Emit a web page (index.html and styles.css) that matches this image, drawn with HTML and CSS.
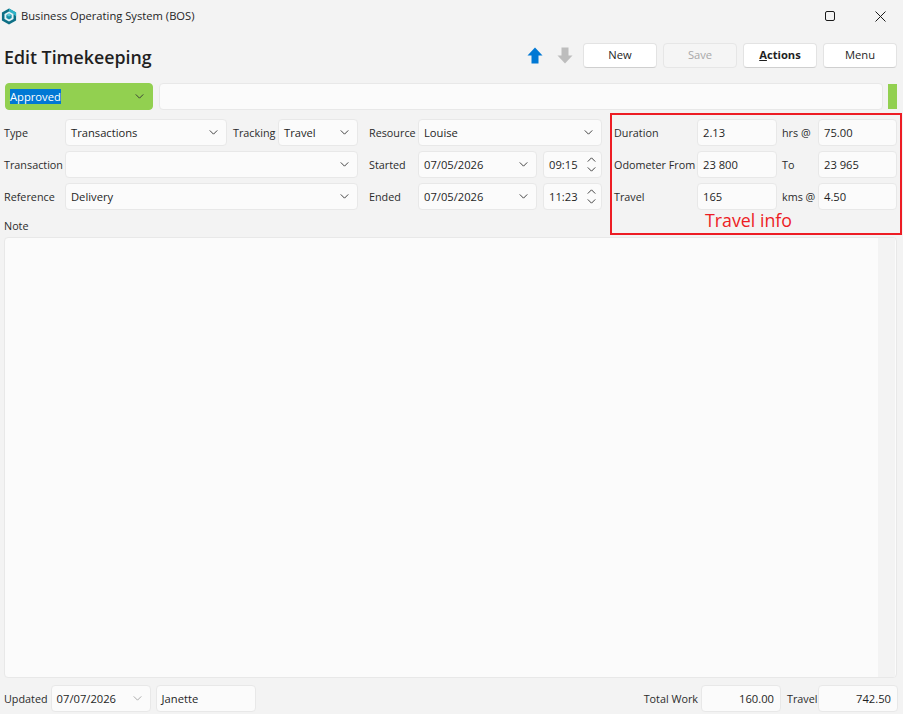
FILE: index.html
```html
<!DOCTYPE html>
<html lang="en">
<head>
    <meta charset="UTF-8">
    <meta name="viewport" content="width=device-width, initial-scale=1.0">
    <title>Business Operating System (BOS)</title>
    <link rel="stylesheet" href="styles.css">
</head>
<body>
    <svg class="defs" width="0" height="0">
        <symbol id="chev-down" viewBox="0 0 10 6"><path d="M0.5 0.5 L5 5 L9.5 0.5" fill="none" stroke="currentColor" stroke-width="1.1"/></symbol>
        <symbol id="chev-up" viewBox="0 0 10 6"><path d="M0.5 5.5 L5 1 L9.5 5.5" fill="none" stroke="currentColor" stroke-width="1.1"/></symbol>
    </svg>

    <div class="title-bar">
        <svg class="logo" width="16" height="17" viewBox="0 0 16 18">
            <path d="M8 0.5 L15.5 4.8 V13.2 L8 17.5 L0.5 13.2 V4.8 Z" fill="#0d6f85"/>
            <path d="M8 0.5 L15.5 4.8 V9 L12.8 6.6 L8 3.6 Z" fill="#2fb4c8"/>
            <path d="M8 3.6 L12.8 6.4 V11.6 L8 14.4 L3.2 11.6 V6.4 Z" fill="#e4f4f7"/>
            <path d="M8 5.8 L10.8 7.4 V10.6 L8 12.2 L5.2 10.6 V7.4 Z" fill="#1591a8"/>
            <path d="M8 5.8 L10.8 7.4 L8 9 L5.2 7.4 Z" fill="#5cc8d8"/>
        </svg>
        <span class="app-name">Business Operating System (BOS)</span>
        <div class="window-buttons">
            <svg width="10" height="10" viewBox="0 0 10 10"><rect x="0.5" y="0.5" width="9" height="9" rx="1.5" fill="none" stroke="#1a1a1a"/></svg>
            <svg width="11" height="11" viewBox="0 0 11 11"><path d="M0.5 0.5 L10.5 10.5 M10.5 0.5 L0.5 10.5" stroke="#1a1a1a"/></svg>
        </div>
    </div>

    <div class="toolbar">
        <h1>Edit Timekeeping</h1>
        <div class="toolbar-actions">
            <svg class="arrow" width="16" height="17" viewBox="0 0 16 17"><path d="M8 0.5 L15.5 8.5 H11.5 V16.5 H4.5 V8.5 H0.5 Z" fill="#0078d4"/></svg>
            <svg class="arrow" width="16" height="17" viewBox="0 0 16 17"><path d="M8 16.5 L15.5 8.5 H11.5 V0.5 H4.5 V8.5 H0.5 Z" fill="#bdbdbd"/></svg>
            <button class="btn">New</button>
            <button class="btn btn-disabled">Save</button>
            <button class="btn btn-bold"><u>A</u>ctions</button>
            <button class="btn">Menu</button>
        </div>
    </div>

    <div class="status-row">
        <div class="field status-select">
            <span class="selected">Approved</span>
            <svg class="chev"><use href="#chev-down"/></svg>
        </div>
        <div class="field status-text"></div>
        <div class="status-flag"></div>
    </div>

    <div class="form">
        <div class="group group-left">
            <label>Type</label>
            <div class="field"><span>Transactions</span><svg class="chev"><use href="#chev-down"/></svg></div>
            <label class="label-inner">Tracking</label>
            <div class="field"><span>Travel</span><svg class="chev"><use href="#chev-down"/></svg></div>
            <label>Transaction</label>
            <div class="field span-3"><span></span><svg class="chev"><use href="#chev-down"/></svg></div>
            <label>Reference</label>
            <div class="field span-3"><span>Delivery</span><svg class="chev"><use href="#chev-down"/></svg></div>
        </div>

        <div class="group group-middle">
            <label>Resource</label>
            <div class="field span-2"><span>Louise</span><svg class="chev"><use href="#chev-down"/></svg></div>
            <label>Started</label>
            <div class="field"><span>07/05/2026</span><svg class="chev"><use href="#chev-down"/></svg></div>
            <div class="field time-field">
                <span>09:15</span>
                <div class="spinner"><svg class="chev"><use href="#chev-up"/></svg><svg class="chev"><use href="#chev-down"/></svg></div>
            </div>
            <label>Ended</label>
            <div class="field"><span>07/05/2026</span><svg class="chev"><use href="#chev-down"/></svg></div>
            <div class="field time-field">
                <span>11:23</span>
                <div class="spinner"><svg class="chev"><use href="#chev-up"/></svg><svg class="chev"><use href="#chev-down"/></svg></div>
            </div>
        </div>

        <div class="group group-right">
            <label>Duration</label>
            <div class="field"><span>2.13</span></div>
            <label class="label-inner">hrs @</label>
            <div class="field"><span>75.00</span></div>
            <label>Odometer From</label>
            <div class="field"><span>23 800</span></div>
            <label class="label-inner">To</label>
            <div class="field"><span>23 965</span></div>
            <label>Travel</label>
            <div class="field"><span>165</span></div>
            <label class="label-inner">kms @</label>
            <div class="field"><span>4.50</span></div>
        </div>
    </div>

    <!-- annotation drawn over the screenshot -->
    <div class="callout"><span>Travel info</span></div>

    <label class="note-label">Note</label>
    <div class="note">
        <div class="note-scroll"></div>
    </div>

    <div class="footer">
        <label>Updated</label>
        <div class="field footer-date"><span>07/07/2026</span><svg class="chev chev-muted"><use href="#chev-down"/></svg></div>
        <div class="field footer-name"><span>Janette</span></div>
        <label class="total-label">Total Work</label>
        <div class="field footer-total"><span>160.00</span></div>
        <label class="travel-label">Travel</label>
        <div class="field footer-total"><span>742.50</span></div>
    </div>
</body>
</html>
```

FILE: styles.css
```css
* {
    margin: 0;
    padding: 0;
    box-sizing: border-box;
}

body {
    position: relative;
    width: 903px;
    height: 714px;
    overflow: hidden;
    background-color: #f3f3f3;
    color: #1f1f1f;
    font-family: "Open Sans", "Noto Sans", sans-serif;
    font-size: 11.2px;
}

.defs {
    position: absolute;
}

label {
    white-space: nowrap;
    font-size: 10.8px;
    color: #2b2b2b;
}

.title-bar {
    height: 32px;
    display: flex;
    align-items: center;
    padding-left: 1px;
}

.logo {
    margin-top: 1px;
}

.app-name {
    margin-left: 4px;
    margin-top: -2px;
}

.window-buttons {
    margin-left: auto;
    display: flex;
    align-items: center;
    gap: 40px;
    padding-right: 17px;
}

.toolbar {
    height: 51px;
    padding: 11px 6px 0 4px;
    display: flex;
    align-items: flex-start;
}

h1 {
    font-size: 17.8px;
    font-weight: 600;
    line-height: 28px;
}

.toolbar-actions {
    margin-left: auto;
    display: flex;
    align-items: center;
    gap: 6px;
}

.arrow {
    margin-right: 8px;
}

.arrow + .btn {
    margin-left: -4px;
}

.btn {
    width: 74px;
    height: 25px;
    padding-bottom: 2px;
    background-color: #fff;
    border: 1px solid #e3e3e3;
    border-bottom-color: #cfcfcf;
    border-radius: 4px;
    font-family: inherit;
    font-size: 11.2px;
    color: #1f1f1f;
}

.btn-disabled {
    background-color: #f5f5f5;
    border-color: #e6e6e6;
    color: #a8a8a8;
}

.btn-bold {
    font-weight: 700;
}

.field {
    height: 27px;
    display: flex;
    align-items: center;
    justify-content: space-between;
    padding: 0 6px 0 5px;
    background-color: #fbfbfb;
    border: 1px solid #e8e8e8;
    border-radius: 4px;
    min-width: 0;
}

.chev {
    width: 9px;
    height: 5px;
    margin-right: 2px;
    color: #333;
    flex-shrink: 0;
}

.chev-muted {
    color: #a5a5a5;
}

.status-row {
    display: flex;
    padding-left: 5px;
}

.status-select {
    width: 148px;
    margin-right: 6px;
    background-color: #92d050;
    border-color: #92d050;
    padding-left: 4px;
}

.selected {
    background-color: #0078d4;
    color: #fff;
    line-height: 15px;
}

.status-text {
    width: 724px;
}

.status-flag {
    width: 9px;
    height: 25px;
    margin: 1px 0 0 5px;
    background-color: #92d050;
}

.form {
    display: flex;
    padding: 9px 0 0 4px;
}

.group {
    display: grid;
    grid-auto-rows: 27px;
    row-gap: 5px;
    align-items: center;
}

.group-left {
    grid-template-columns: 61px 162px 51px 80px;
}

.group-middle {
    grid-template-columns: 49px 119px 65px;
    margin-left: 11px;
}

.group-middle .time-field {
    margin-left: 6px;
}

.group-right {
    grid-template-columns: 83px 80px 41px 79px;
    margin-left: 12px;
}

.label-inner {
    padding-left: 6px;
}

.group-right .label-inner {
    padding-left: 5px;
}

.span-3 {
    grid-column: span 3;
}

.span-2 {
    grid-column: span 2;
}

.time-field {
    padding-right: 3px;
}

.spinner {
    display: flex;
    flex-direction: column;
    gap: 5px;
}

.callout {
    position: absolute;
    left: 610px;
    top: 113px;
    width: 292px;
    height: 122px;
    border: 2px solid #ed1c24;
    pointer-events: none;
}

.callout span {
    position: absolute;
    left: 93px;
    top: 94px;
    font-family: "Open Sans", sans-serif;
    font-size: 17.8px;
    line-height: 22px;
    color: #ed1c24;
}

.note-label {
    display: block;
    height: 21px;
    padding: 8px 0 0 4px;
    line-height: 16px;
}

.note {
    margin: 6px 6px 0 4px;
    height: 441px;
    display: flex;
    justify-content: flex-end;
    background-color: #fbfbfb;
    border: 1px solid #e8e8e8;
    border-radius: 4px;
    padding-right: 1px;
}

.note-scroll {
    width: 17px;
    background-color: #f3f3f3;
}

.footer {
    display: flex;
    align-items: center;
    margin-top: 7px;
    padding: 0 5px 0 4px;
}

.footer-date {
    width: 100px;
    margin-left: 3px;
}

.footer-name {
    width: 100px;
    margin-left: 5px;
}

.total-label {
    margin-left: auto;
}

.footer-total {
    width: 80px;
    margin-left: 3px;
    justify-content: flex-end;
}

.travel-label {
    width: 28px;
    margin-left: 6px;
}
```
